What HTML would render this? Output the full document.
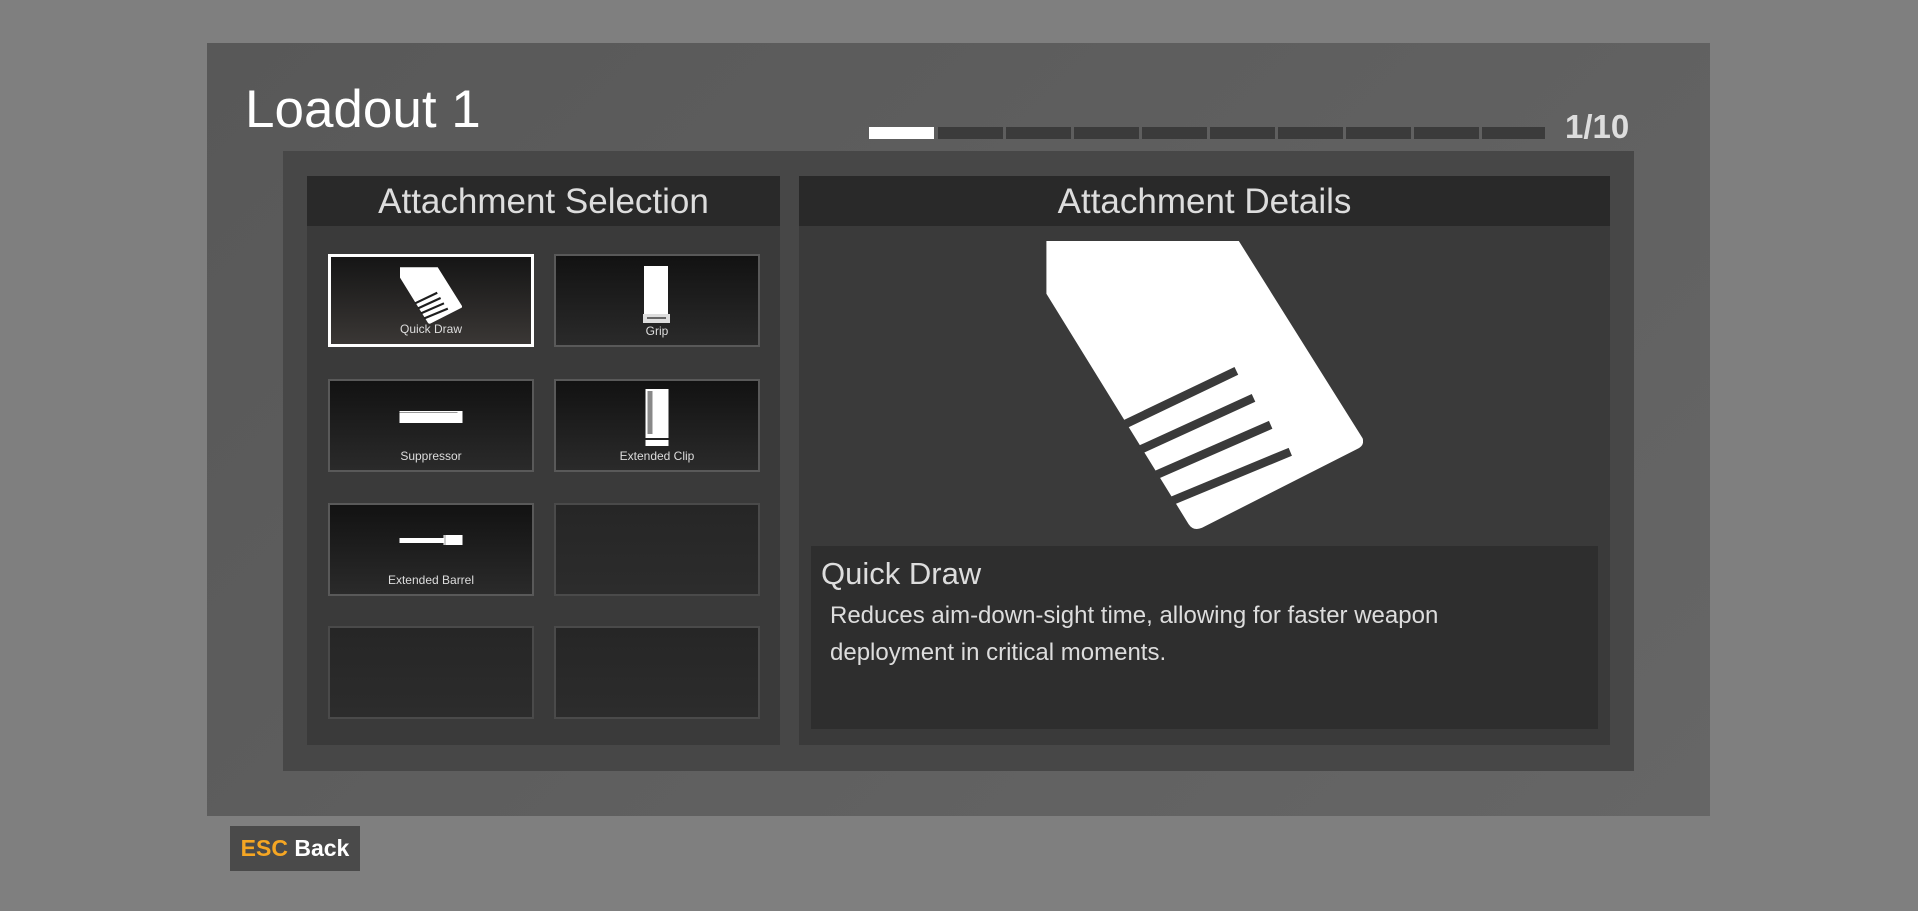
<!DOCTYPE html>
<html><head><meta charset="utf-8"><style>
*{margin:0;padding:0;box-sizing:border-box}
body{width:1918px;height:911px;background:#7f7f7f;font-family:"Liberation Sans",sans-serif;position:relative;overflow:hidden}
.abs{position:absolute}
#outer{left:207px;top:43px;width:1503px;height:773px;background:linear-gradient(135deg,#585858,#666)}
#title{left:245px;top:80px;font-size:53px;color:#fff;line-height:60px}
.seg{position:absolute;top:127px;height:12px;background:#3b3b3b}
#cnt{left:1565px;top:108px;font-size:33px;font-weight:bold;color:#ddd}
#inner{left:283px;top:151px;width:1351px;height:620px;background:#474747}
#lp{left:307px;top:176px;width:473px;height:569px;background:#3a3a3a}
#rp{left:799px;top:176px;width:811px;height:569px;background:#3a3a3a}
.hdr{position:absolute;left:0;top:0;right:0;height:50px;background:#292929;color:#ddd;font-size:35px;text-align:center;line-height:52px}
.card{position:absolute;width:206px;height:93px;border:2px solid #595959;background:linear-gradient(180deg,#121212,#2a2a2a)}
.card.e{background:linear-gradient(180deg,#262626,#2c2c2c);border-color:#4a4a4a}
.card.sel{border:3px solid #fff;background:linear-gradient(180deg,#151515,#3a3735)}
.card span{position:absolute;left:0;right:0;top:68px;text-align:center;color:#ddd;font-size:12px}
.card svg{position:absolute;left:50%;transform:translateX(-50%)}
#desc{left:811px;top:546px;width:787px;height:183px;background:#2e2e2e;color:#ddd}
#esc{left:230px;top:826px;width:130px;height:45px;background:#4a4a4a;font-weight:bold;font-size:23px;line-height:45px;text-align:center;color:#fff}
</style></head><body>
<div class="abs" id="outer"></div>
<div class="abs" id="title">Loadout 1</div>
<div class="seg" style="left:869px;width:65px;background:#fff"></div>
<div class="seg" style="left:938px;width:65px"></div>
<div class="seg" style="left:1006px;width:65px"></div>
<div class="seg" style="left:1074px;width:65px"></div>
<div class="seg" style="left:1142px;width:65px"></div>
<div class="seg" style="left:1210px;width:65px"></div>
<div class="seg" style="left:1278px;width:65px"></div>
<div class="seg" style="left:1346px;width:65px"></div>
<div class="seg" style="left:1414px;width:65px"></div>
<div class="seg" style="left:1482px;width:63px"></div>
<div class="abs" id="cnt">1/10</div>
<div class="abs" id="inner"></div>
<div class="abs" id="lp"><div class="hdr">Attachment Selection</div></div>
<div class="abs" id="rp"><div class="hdr">Attachment Details</div>
<svg style="position:absolute;left:247px;top:65px" width="317" height="288" viewBox="855 197 258 235">
<path d="M855 197 L1012 197 L1113 358 Q1115 364 1108 367 L982 431 Q975 434 971 428 L855 240 Z" fill="#fff"/>
<g stroke="#3a3a3a" stroke-width="7"><line x1="918" y1="347" x2="1010" y2="303"/><line x1="930" y1="368" x2="1024" y2="325"/><line x1="942" y1="389" x2="1038" y2="347"/><line x1="955" y1="410" x2="1054" y2="369"/></g>
</svg>
</div>
<div class="abs" id="desc">
<div style="position:absolute;left:10px;top:10px;font-size:31px">Quick Draw</div>
<div style="position:absolute;left:19px;top:51px;width:720px;font-size:24px;line-height:37px">Reduces aim-down-sight time, allowing for faster weapon deployment in critical moments.</div>
</div>
<div class="card sel" style="left:328px;top:254px"><svg style="top:10px" width="62" height="57" viewBox="855 197 258 235">
<path d="M855 197 L1012 197 L1113 358 Q1115 364 1108 367 L982 431 Q975 434 971 428 L855 240 Z" fill="#fff"/>
<g stroke="#1e1e1e" stroke-width="9"><line x1="918" y1="347" x2="1010" y2="303"/><line x1="930" y1="368" x2="1024" y2="325"/><line x1="942" y1="389" x2="1038" y2="347"/><line x1="955" y1="410" x2="1054" y2="369"/></g>
</svg><span style="top:65px">Quick Draw</span></div>
<div class="card" style="left:554px;top:254px"><svg style="top:10px" width="28" height="57" viewBox="0 0 28 57"><rect x="1" y="0" width="24" height="48" fill="#fff"/><rect x="0" y="48" width="27" height="9" fill="#ddd"/><rect x="4" y="51" width="19" height="2" fill="#666"/></svg><span>Grip</span></div>
<div class="card" style="left:328px;top:379px"><svg style="top:30px" width="63" height="12" viewBox="0 0 63 12"><rect width="63" height="12" fill="#fff"/><rect y="1" width="58" height="1" fill="#999"/></svg><span>Suppressor</span></div>
<div class="card" style="left:554px;top:379px"><svg style="top:8px" width="23" height="57" viewBox="0 0 23 57"><rect width="23" height="57" fill="#fff"/><rect x="2" y="2" width="5" height="43" fill="#888"/><rect y="49" width="23" height="2" fill="#222"/></svg><span>Extended Clip</span></div>
<div class="card" style="left:328px;top:503px"><svg style="top:30px" width="63" height="10" viewBox="0 0 63 10"><rect x="0" y="3" width="45" height="5" fill="#fff"/><rect x="44" y="0" width="19" height="10" fill="#fff"/><rect x="45" y="0" width="1" height="10" fill="#999"/></svg><span>Extended Barrel</span></div>
<div class="card e" style="left:554px;top:503px"></div>
<div class="card e" style="left:328px;top:626px"></div>
<div class="card e" style="left:554px;top:626px"></div>
<div class="abs" id="esc"><span style="color:#f5a623">ESC</span> Back</div>
</body></html>
